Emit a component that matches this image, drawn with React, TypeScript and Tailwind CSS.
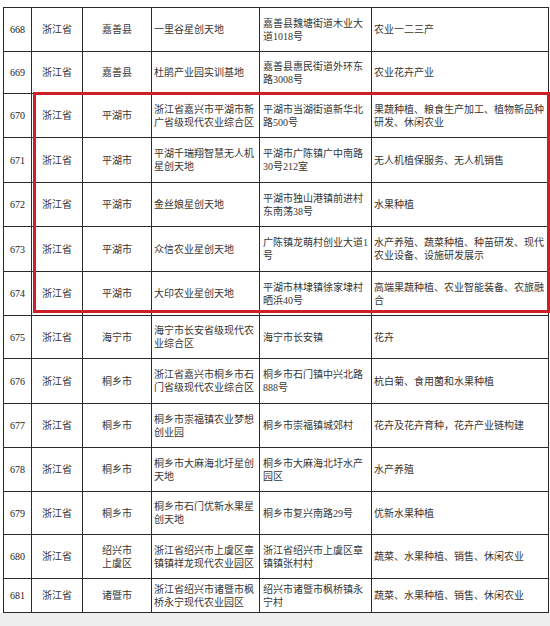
import React from "react";

type Row = {
  no: string;
  city: string[];
  name: string[];
  addr: string[];
  biz: string[];
};

const rows: Row[] = [
  { no: "668", city: ["嘉善县"], name: ["一里谷星创天地"], addr: ["嘉善县魏塘街道木业大", "道1018号"], biz: ["农业一二三产"] },
  { no: "669", city: ["嘉善县"], name: ["杜鹃产业园实训基地"], addr: ["嘉善县惠民街道外环东", "路3008号"], biz: ["农业花卉产业"] },
  { no: "670", city: ["平湖市"], name: ["浙江省嘉兴市平湖市新", "广省级现代农业综合区"], addr: ["平湖市当湖街道新华北", "路500号"], biz: ["果蔬种植、粮食生产加工、植物新品种", "研发、休闲农业"] },
  { no: "671", city: ["平湖市"], name: ["平湖千瑞翔智慧无人机", "星创天地"], addr: ["平湖市广陈镇广中南路", "30号212室"], biz: ["无人机植保服务、无人机销售"] },
  { no: "672", city: ["平湖市"], name: ["金丝娘星创天地"], addr: ["平湖市独山港镇前进村", "东南荡38号"], biz: ["水果种植"] },
  { no: "673", city: ["平湖市"], name: ["众信农业星创天地"], addr: ["广陈镇龙萌村创业大道1", "号"], biz: ["水产养殖、蔬菜种植、种苗研发、现代", "农业设备、设施研发展示"] },
  { no: "674", city: ["平湖市"], name: ["大印农业星创天地"], addr: ["平湖市林埭镇徐家埭村", "晒浜40号"], biz: ["高端果蔬种植、农业智能装备、农旅融", "合"] },
  { no: "675", city: ["海宁市"], name: ["海宁市长安省级现代农", "业综合区"], addr: ["海宁市长安镇"], biz: ["花卉"] },
  { no: "676", city: ["桐乡市"], name: ["浙江省嘉兴市桐乡市石", "门省级现代农业综合区"], addr: ["桐乡市石门镇中兴北路", "888号"], biz: ["杭白菊、食用菌和水果种植"] },
  { no: "677", city: ["桐乡市"], name: ["桐乡市崇福镇农业梦想", "创业园"], addr: ["桐乡市崇福镇城郊村"], biz: ["花卉及花卉育种，花卉产业链构建"] },
  { no: "678", city: ["桐乡市"], name: ["桐乡市大麻海北圩星创", "天地"], addr: ["桐乡市大麻海北圩水产", "园区"], biz: ["水产养殖"] },
  { no: "679", city: ["桐乡市"], name: ["桐乡市石门优新水果星", "创天地"], addr: ["桐乡市复兴南路29号"], biz: ["优新水果种植"] },
  { no: "680", city: ["绍兴市", "上虞区"], name: ["浙江省绍兴市上虞区章", "镇镇祥龙现代农业园区"], addr: ["浙江省绍兴市上虞区章", "镇镇张村村"], biz: ["蔬菜、水果种植、销售、休闲农业"] },
  { no: "681", city: ["诸暨市"], name: ["浙江省绍兴市诸暨市枫", "桥永宁现代农业园区"], addr: ["绍兴市诸暨市枫桥镇永", "宁村"], biz: ["蔬菜、水果种植、销售、休闲农业"] },
];

function Lines({ lines }: { lines: string[] }) {
  return (
    <>
      {lines.map((l, i) => (
        <div key={i} className="whitespace-nowrap">
          {l}
        </div>
      ))}
    </>
  );
}

const cell = "border-r border-b border-[#2b2b2b] flex items-center overflow-hidden";

export default function App() {
  return (
    <div
      className="w-[550px] h-[626px] bg-white flex flex-col text-[10px] leading-[13px] text-[#363636]"
      style={{ fontFamily: '"Liberation Serif", "Noto Sans CJK SC", serif' }}
    >
      <div className="relative pt-[7px] pl-[3px]">
        <div className="grid w-[546px] grid-cols-[28px_51px_69px_108px_112px_177px] grid-rows-[44px_42px_44px_45px_44px_45px_44px_43px_45px_44px_44px_43px_44px_34px] border-l border-t border-[#2b2b2b]">
          {rows.map((r) => (
            <React.Fragment key={r.no}>
              <div className={`${cell} justify-center text-[#222]`}>{r.no}</div>
              <div className={`${cell} justify-center`}>浙江省</div>
              <div className={`${cell} justify-center text-center`}>
                <div>
                  <Lines lines={r.city} />
                </div>
              </div>
              <div className={`${cell} pl-[2px]`}>
                <div>
                  <Lines lines={r.name} />
                </div>
              </div>
              <div className={`${cell} pl-[3px]`}>
                <div>
                  <Lines lines={r.addr} />
                </div>
              </div>
              <div className={`${cell} pl-[2px]`}>
                <div>
                  <Lines lines={r.biz} />
                </div>
              </div>
            </React.Fragment>
          ))}
        </div>
        {/* highlight box over rows 670-674 */}
        <div className="absolute left-[33px] top-[92px] w-[517px] h-[221px] border-[3px] border-[#cf1f26] pointer-events-none" />
      </div>
      <div className="flex-1 bg-[#eeeeee]" />
    </div>
  );
}
